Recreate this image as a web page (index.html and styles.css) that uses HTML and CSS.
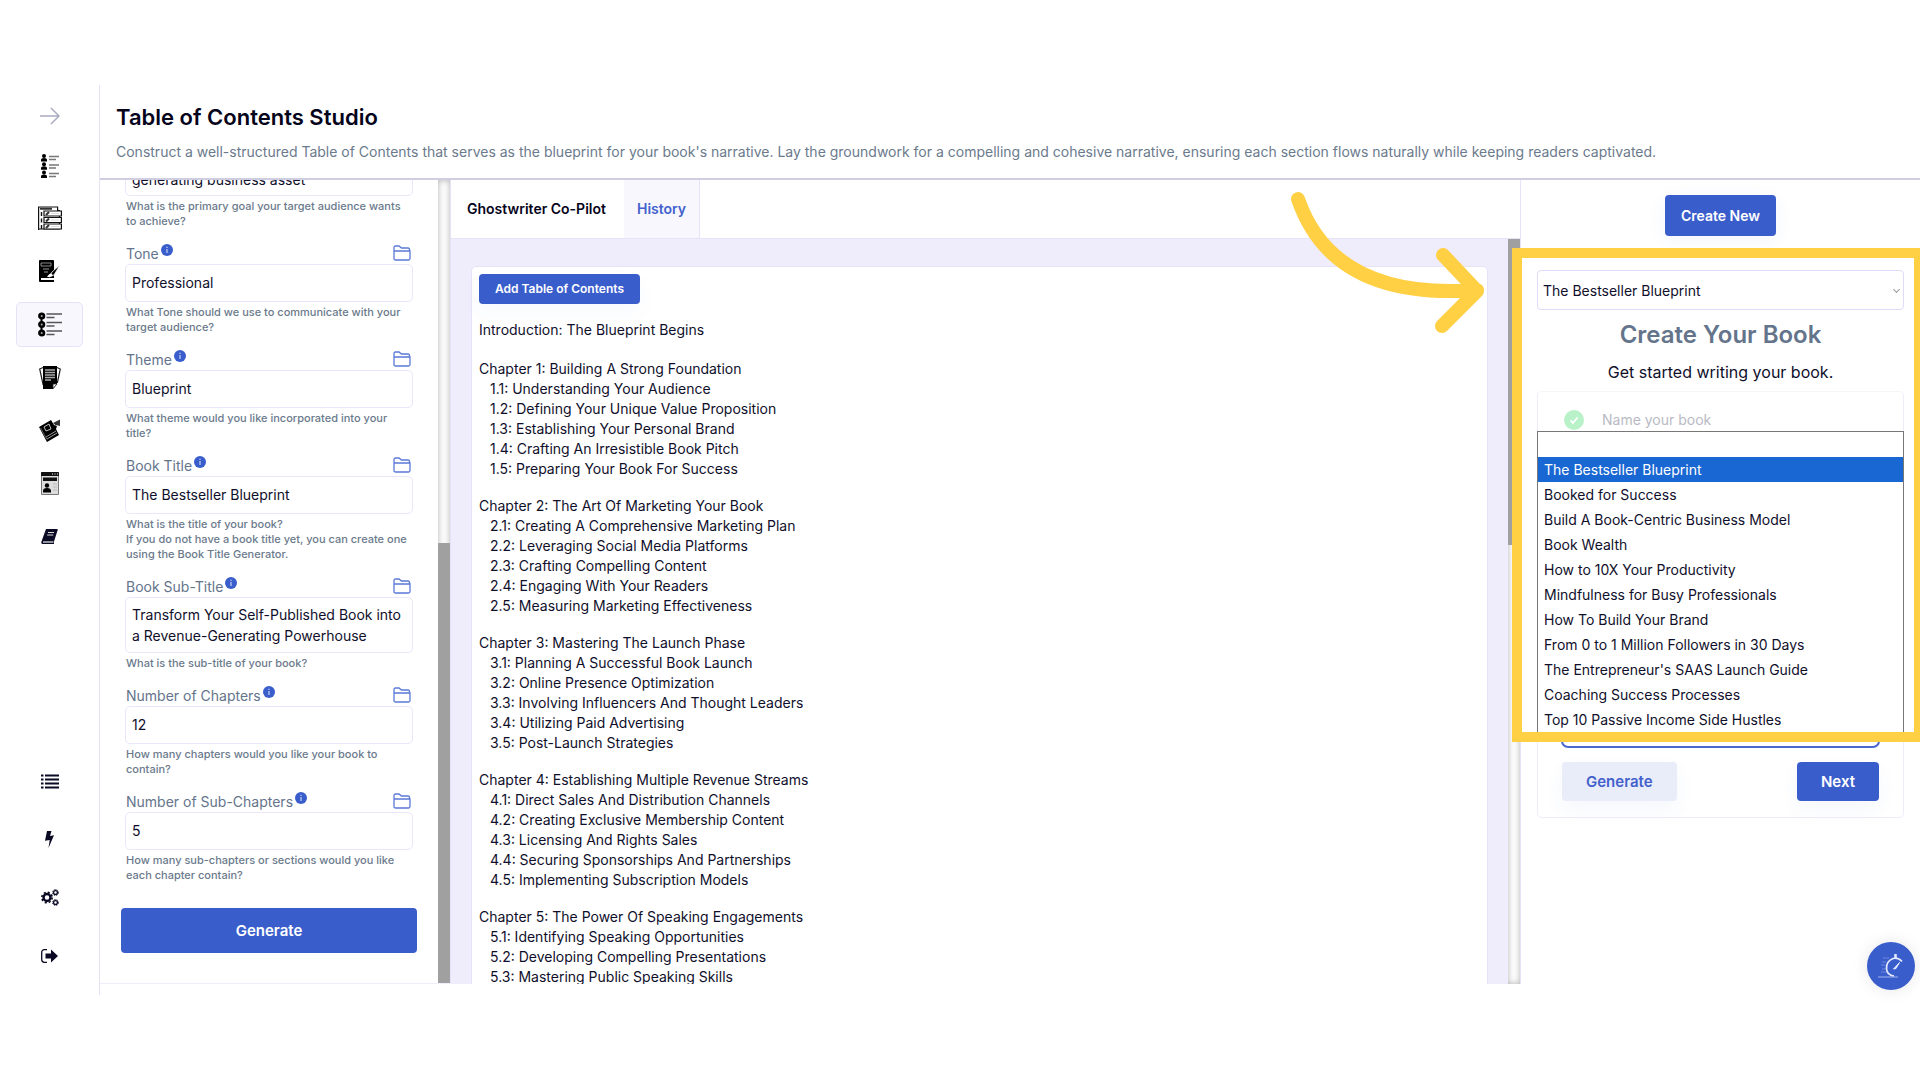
FILE: index.html
```html
<!DOCTYPE html>
<html lang="en">
<head>
  <meta charset="UTF-8">
  <meta name="viewport" content="width=device-width, initial-scale=1.0">
  <title>Table of Contents Studio</title>
  <link rel="stylesheet" href="styles.css">
</head>
<body>
  <!-- shared icons -->
  <svg class="defs" width="0" height="0" aria-hidden="true">
    <symbol id="folder" viewBox="0 0 18 16">
      <path d="M1 6V2.500Q1 1 2.500 1H6l2.500 2H15q1.500 0 1.500 1.500V6M1 6h16v7.500Q17 15 15.500 15h-13Q1 15 1 13.500z" fill="none" stroke="#5b78d8" stroke-width="1.300"/>
    </symbol>
    <symbol id="info" viewBox="0 0 12 12">
      <circle cx="6" cy="6" r="6" fill="#3a5dcc"/>
      <path d="M6 5v4M6 2.800v1.200" stroke="#c5d1f4" stroke-width="1.200"/>
    </symbol>
  </svg>

  <div class="app">
    <nav class="sidebar" aria-label="Studios">
      <div class="nav-group">
        <a href="#" class="nav-item nav-toggle" aria-label="Expand">
          <svg width="20" height="18" viewBox="0 0 20 18"><path d="M0 9h19M11 1l8 8-8 8" fill="none" stroke="#aaabc0" stroke-width="1.500"/></svg>
        </a>
        <a href="#" class="nav-item" aria-label="Audience">
          <svg width="18" height="24" viewBox="0 0 18 24">
            <g id="people"><circle cx="3" cy="2" r="2"/><path d="M0 7.500V6q0-2 3-2t3 2v1.500z"/></g>
            <use href="#people" y="8.300"/><use href="#people" y="16.500"/>
            <path d="M8 2.500h10M8 5.500h7M8 11h10M8 14h7M8 19.500h10M8 22.500h7" stroke="#777" stroke-width="1.300"/>
          </svg>
        </a>
        <a href="#" class="nav-item" aria-label="Outline">
          <svg width="24" height="25" viewBox="0 0 24 25">
            <g fill="#fff" stroke="#111" stroke-width="1.200">
              <path d="M.600 24V1h19v3.500h1.800v18.500H.600z"/><path d="M6 5h17.400v5H6zM6 11.500h17.400v5H6zM6 18h17.400v5H6z"/>
            </g>
            <path d="M3.500 6v4M3.500 12.500v4M3.500 19v4" stroke="#111" stroke-width="1.400"/>
            <path d="M2 2.800h12M8 9l3-3M8 15.500l3-3M8 22l3-3" stroke="#333" stroke-width="2"/>
            <path d="M13 7.500h8M13 14h8M13 20.500h8" stroke="#ddd"/>
          </svg>
        </a>
        <a href="#" class="nav-item" aria-label="Title">
          <svg width="23" height="23" viewBox="0 0 23 23">
            <path d="M1 1q0-1 1-1h13q1 0 1 1v17H3v2h13v2H2q-1 0-1-1z"/><path d="M3 3h10v3H3z" fill="none" stroke="#aaa" stroke-width=".8"/>
            <path d="M5 9h6M6 12h4" stroke="#999"/><path d="M22.500 4.500 14 12l-3 5 5-2 6-10z" stroke="#fff" stroke-width=".8"/>
            <path d="M9 17q3-5 5-3t-3 3z" fill="#fff"/>
          </svg>
        </a>
        <a href="#" class="nav-item active" aria-label="Table of contents" aria-current="page">
          <svg width="24" height="25" viewBox="0 0 24 25">
            <path d="M3.500 2v20" stroke="#000" stroke-width="2"/>
            <g fill="#aaa" stroke="#000" stroke-width="2.600"><circle cx="3.700" cy="4" r="2.300"/><circle cx="3.700" cy="12.500" r="2.300"/><circle cx="3.700" cy="21" r="2.300"/></g>
            <path d="M8.500 2H24M8.500 5.500h8M8.500 10.500H24M8.500 14h8M8.500 19H24M8.500 22.500h8" stroke="#555" stroke-width="1.500"/>
          </svg>
        </a>
        <a href="#" class="nav-item" aria-label="Pages">
          <svg width="22" height="25" viewBox="0 0 22 25">
            <path d="M4 2.500.700 4l3.500 16M18 2.500l3.300 1.500-3 14" fill="none" stroke="#222" stroke-width="1.200"/>
            <path d="M4 1h14v18l-4 5H4z"/><path d="M6 5h10M6 7.500h10M6 10h10M6 12.500h10M6 15h6" stroke="#aaa" stroke-width="1.300"/>
            <path d="M14 23.500V19h4z" fill="#fff" stroke="#222" stroke-width=".8"/>
          </svg>
        </a>
        <a href="#" class="nav-item" aria-label="Marketing">
          <svg width="22" height="23" viewBox="0 0 22 23">
            <path d="m0 8 12-7 3 5 3 1-1 3 3 6-12 7z"/>
            <path d="m5 8 5-3 2 5-5 2z" fill="none" stroke="#bbb"/><path d="m7 18 10-6M8 20l10-6" stroke="#999"/>
            <path d="m1.500 9 6.500 11.500" stroke="#777" stroke-width=".8"/>
            <path d="m14 4 3-1.500v4zM17 2.500 21 .5v6.500l-4-1" fill="#333"/>
          </svg>
        </a>
        <a href="#" class="nav-item" aria-label="Author page">
          <svg width="18" height="23" viewBox="0 0 18 23">
            <path d="M.5.5h17v22H.5z" fill="#ddd" stroke="#777"/><path d="M0 1q0-1 1-1h16q1 0 1 1v3H0zM2 5.500h14V9H2z" fill="#111"/>
            <path d="M11 2h1M13.500 2h1M16 2h1" stroke="#fff"/>
            <circle cx="6" cy="13.500" r="2.200"/><path d="M2 20.500V19q0-3 4-3t4 3v1.500z"/>
            <path d="M12 12h4M12 15h4M12 18h4" stroke="#bbb"/>
          </svg>
        </a>
        <a href="#" class="nav-item" aria-label="Book">
          <svg width="17" height="16" viewBox="0 0 17 16">
            <path d="M5 0h11q1 0 .7 1L13 12.500v2.500H1.500Q0 15 .3 13z" fill="#0b0a25"/>
            <path d="M2 13h10.500" stroke="#ddd" stroke-width="1.300"/><path d="M7 3.500h6M6.200 6h6" stroke="#ddd" stroke-width="1.200"/>
          </svg>
        </a>
      </div>
      <div class="nav-group nav-bottom">
        <a href="#" class="nav-item" aria-label="List">
          <svg width="18" height="15" viewBox="0 0 18 15"><path d="M0 1.500h2.500M4 1.500h14M0 5.500h2.500M4 5.500h14M0 9.500h2.500M4 9.500h14M0 13.500h2.500M4 13.500h14" stroke="#0b0a25" stroke-width="2.200"/></svg>
        </a>
        <a href="#" class="nav-item" aria-label="Quick actions">
          <svg width="9" height="17" viewBox="0 0 9 17"><path d="M2 0h4.500L5 5l4-.8L3.500 17l1.200-8L0 9.800z" fill="#0b0a25"/></svg>
        </a>
        <a href="#" class="nav-item" aria-label="Settings">
          <svg width="18" height="17" viewBox="0 0 18 17" fill="none" stroke="#0b0a25">
            <circle cx="6" cy="8.500" r="3.500" stroke-width="2.500"/><circle cx="6" cy="8.500" r="5.200" stroke-width="1.600" stroke-dasharray="2.100 2"/>
            <circle cx="14.500" cy="3.500" r="1.900" stroke-width="1.300"/><circle cx="14.500" cy="3.500" r="2.900" stroke-dasharray="1.400 1"/>
            <circle cx="14.500" cy="13.500" r="1.900" stroke-width="1.300"/><circle cx="14.500" cy="13.500" r="2.900" stroke-dasharray="1.400 1"/>
          </svg>
        </a>
        <a href="#" class="nav-item" aria-label="Log out">
          <svg width="17" height="14" viewBox="0 0 17 14"><path d="M6 .700H3.500Q.700.700.700 3.500v7q0 2.800 2.800 2.800H6" fill="none" stroke="#0b0a25" stroke-width="1.300"/><path d="M4.500 4.500H10V.500L17 7l-7 6.500v-4H4.500z" fill="#0b0a25"/></svg>
        </a>
      </div>
    </nav>

    <div class="page">
      <header class="page-header">
        <h1>Table of Contents Studio</h1>
        <p>Construct a well-structured Table of Contents that serves as the blueprint for your book's narrative. Lay the groundwork for a compelling and cohesive narrative, ensuring each section flows naturally while keeping readers captivated.</p>
      </header>

      <div class="workspace">
        <section class="form-panel">
          <form class="form">
            <div class="field">
              <textarea class="scrolled" rows="2" aria-label="Goal">generating business asset</textarea>
              <p class="help">What is the primary goal your target audience wants to achieve?</p>
            </div>
            <div class="field">
              <div class="field-head"><label for="tone">Tone</label><svg class="info"><use href="#info"/></svg><svg class="folder"><use href="#folder"/></svg></div>
              <input type="text" id="tone" value="Professional">
              <p class="help">What Tone should we use to communicate with your target audience?</p>
            </div>
            <div class="field">
              <div class="field-head"><label for="theme">Theme</label><svg class="info"><use href="#info"/></svg><svg class="folder"><use href="#folder"/></svg></div>
              <input type="text" id="theme" value="Blueprint">
              <p class="help">What theme would you like incorporated into your title?</p>
            </div>
            <div class="field">
              <div class="field-head"><label for="title">Book Title</label><svg class="info"><use href="#info"/></svg><svg class="folder"><use href="#folder"/></svg></div>
              <input type="text" id="title" value="The Bestseller Blueprint">
              <p class="help">What is the title of your book?<br>If you do not have a book title yet, you can create one using the Book Title Generator.</p>
            </div>
            <div class="field">
              <div class="field-head"><label for="subtitle">Book Sub-Title</label><svg class="info"><use href="#info"/></svg><svg class="folder"><use href="#folder"/></svg></div>
              <textarea id="subtitle" rows="2">Transform Your Self-Published Book into a Revenue-Generating Powerhouse</textarea>
              <p class="help">What is the sub-title of your book?</p>
            </div>
            <div class="field">
              <div class="field-head"><label for="chapters">Number of Chapters</label><svg class="info"><use href="#info"/></svg><svg class="folder"><use href="#folder"/></svg></div>
              <input type="text" id="chapters" value="12">
              <p class="help">How many chapters would you like your book to contain?</p>
            </div>
            <div class="field">
              <div class="field-head"><label for="subchapters">Number of Sub-Chapters</label><svg class="info"><use href="#info"/></svg><svg class="folder"><use href="#folder"/></svg></div>
              <input type="text" id="subchapters" value="5">
              <p class="help">How many sub-chapters or sections would you like each chapter contain?</p>
            </div>
            <button type="button" class="btn btn-wide">Generate</button>
          </form>
          <div class="scrollbar at-end"><div class="thumb"></div></div>
        </section>

        <main class="editor">
          <div class="tabs">
            <button type="button" class="tab">Ghostwriter Co-Pilot</button>
            <button type="button" class="tab tab-alt">History</button>
          </div>
          <div class="editor-body">
            <div class="toc-wrap">
              <article class="toc">
                <button type="button" class="btn btn-small">Add Table of Contents</button>
                <p class="intro">Introduction: The Blueprint Begins</p>
                <h2>Chapter 1: Building A Strong Foundation</h2>
                <ul>
                  <li>1.1: Understanding Your Audience</li>
                  <li>1.2: Defining Your Unique Value Proposition</li>
                  <li>1.3: Establishing Your Personal Brand</li>
                  <li>1.4: Crafting An Irresistible Book Pitch</li>
                  <li>1.5: Preparing Your Book For Success</li>
                </ul>
                <h2>Chapter 2: The Art Of Marketing Your Book</h2>
                <ul>
                  <li>2.1: Creating A Comprehensive Marketing Plan</li>
                  <li>2.2: Leveraging Social Media Platforms</li>
                  <li>2.3: Crafting Compelling Content</li>
                  <li>2.4: Engaging With Your Readers</li>
                  <li>2.5: Measuring Marketing Effectiveness</li>
                </ul>
                <h2>Chapter 3: Mastering The Launch Phase</h2>
                <ul>
                  <li>3.1: Planning A Successful Book Launch</li>
                  <li>3.2: Online Presence Optimization</li>
                  <li>3.3: Involving Influencers And Thought Leaders</li>
                  <li>3.4: Utilizing Paid Advertising</li>
                  <li>3.5: Post-Launch Strategies</li>
                </ul>
                <h2>Chapter 4: Establishing Multiple Revenue Streams</h2>
                <ul>
                  <li>4.1: Direct Sales And Distribution Channels</li>
                  <li>4.2: Creating Exclusive Membership Content</li>
                  <li>4.3: Licensing And Rights Sales</li>
                  <li>4.4: Securing Sponsorships And Partnerships</li>
                  <li>4.5: Implementing Subscription Models</li>
                </ul>
                <h2>Chapter 5: The Power Of Speaking Engagements</h2>
                <ul>
                  <li>5.1: Identifying Speaking Opportunities</li>
                  <li>5.2: Developing Compelling Presentations</li>
                  <li>5.3: Mastering Public Speaking Skills</li>
                </ul>
              </article>
            </div>
            <div class="scrollbar"><div class="thumb"></div></div>
          </div>
        </main>

        <aside class="book-panel">
          <button type="button" class="btn btn-new">Create New</button>
          <div class="picker">
            <select aria-label="Book">
              <option>The Bestseller Blueprint</option>
            </select>
            <ul class="options" role="listbox" aria-label="Books">
              <li role="option" aria-label="None"></li>
              <li role="option" class="selected" aria-selected="true">The Bestseller Blueprint</li>
              <li role="option">Booked for Success</li>
              <li role="option">Build A Book-Centric Business Model</li>
              <li role="option">Book Wealth</li>
              <li role="option">How to 10X Your Productivity</li>
              <li role="option">Mindfulness for Busy Professionals</li>
              <li role="option">How To Build Your Brand</li>
              <li role="option">From 0 to 1 Million Followers in 30 Days</li>
              <li role="option">The Entrepreneur's SAAS Launch Guide</li>
              <li role="option">Coaching Success Processes</li>
              <li role="option">Top 10 Passive Income Side Hustles</li>
            </ul>
          </div>
          <h2>Create Your Book</h2>
          <p class="lead">Get started writing your book.</p>
          <div class="steps">
            <div class="step-name">
              <svg width="20" height="20" viewBox="0 0 20 20"><circle cx="10" cy="10" r="10" fill="#b9f2c9"/><path d="m6.500 10.500 2.500 2.500 4.500-5.500" fill="none" stroke="#fff" stroke-width="1.800"/></svg>
              <span>Name your book</span>
            </div>
            <textarea class="answer" aria-label="Answer"></textarea>
            <div class="actions">
              <button type="button" class="btn btn-light">Generate</button>
              <button type="button" class="btn btn-next">Next</button>
            </div>
          </div>

          <!-- tutorial highlight -->
          <div class="highlight"></div>
          <svg class="pointer" width="210" height="160" viewBox="0 0 210 160">
            <path d="M18 19C39 80 92 118 197 110M163 75l34 36-35 35" fill="none" stroke="#ffd044" stroke-width="14" stroke-linecap="round" stroke-linejoin="round"/>
          </svg>
        </aside>
      </div>
    </div>

    <button type="button" class="fab" aria-label="Quick start">
      <svg width="28" height="28" viewBox="0 0 28 28" fill="none" stroke="#e4eaff">
        <path d="M25 9.500Q21 5 16 6.500q-7 3-6.500 10T17 24" stroke-width="1.700"/>
        <path d="M18.500 2v4" stroke-width="2.500"/><path d="m16.500 17 6-6.500-3.500 6z" fill="#e4eaff" stroke-width="1"/>
        <path d="M1 25h20" stroke-width="1" opacity=".6"/>
        <path d="M6 6h6M5 10h4M4 13h4M5 17h4M4 20h5" stroke-width="1" opacity=".3"/>
      </svg>
    </button>
  </div>
</body>
</html>
```
FILE: styles.css
```css
* {
  margin: 0;
  padding: 0;
  box-sizing: border-box;
}

body {
  background: #fff;
  color: #100f2b;
  font-family: Inter, "Liberation Sans", sans-serif;
  font-size: 14px;
  line-height: 20px;
}

button, input, textarea, select {
  font: inherit;
  color: inherit;
}

.defs {
  position: absolute;
}

.app {
  position: relative;
  display: flex;
  height: 100vh;
  padding: 85px 0;
  overflow: hidden;
}

/* sidebar */
.sidebar {
  width: 100px;
  flex: none;
  display: flex;
  flex-direction: column;
  justify-content: space-between;
  align-items: center;
  padding: 8px 0 17px;
  border-right: 1px solid #e6e3f8;
}

.nav-group {
  display: flex;
  flex-direction: column;
  gap: 8px;
}

.nav-bottom {
  gap: 13px;
}

.nav-item {
  width: 67px;
  height: 45px;
  display: flex;
  align-items: center;
  justify-content: center;
  border: 1px solid transparent;
  border-radius: 5px;
}

.nav-toggle {
  margin-bottom: -3px;
}

.nav-item.active {
  background: #f8f7fe;
  border-color: #e6e3f8;
}

/* header */
.page {
  flex: 1;
  min-width: 0;
  display: flex;
  flex-direction: column;
  margin-bottom: 11px;
}

.page-header {
  height: 95px;
  padding: 18px 16px 0;
  border-bottom: 2px solid #cfcde2;
}

.page-header h1 {
  font-size: 22px;
  line-height: 28px;
  font-weight: 600;
  color: #05041a;
  margin-bottom: 11px;
}

.page-header p {
  color: #6b7a8c;
  white-space: nowrap;
}

.workspace {
  flex: 1;
  min-height: 0;
  display: flex;
}

/* left form */
.form-panel {
  width: 350px;
  flex: none;
  display: flex;
  border-bottom: 1px solid #efedfc;
}

.form {
  flex: 1;
  display: flex;
  flex-direction: column;
  justify-content: flex-end;
  gap: 15px;
  padding: 0 21px 30px 21px;
  overflow: hidden;
}

.field {
  flex: none;
  padding: 0 4px;
}

.field-head {
  display: flex;
  align-items: flex-start;
  height: 20px;
  padding: 0 2px 0 1px;
  color: #64748b;
}

.info {
  width: 12px;
  height: 12px;
  margin-left: 2px;
}

.folder {
  width: 18px;
  height: 16px;
  margin: 1px 0 0 auto;
}

.field input,
.field textarea {
  display: block;
  width: 100%;
  border: 1px solid #eae7fb;
  border-radius: 5px;
  padding: 6px;
  background: #fff;
  outline: none;
  resize: none;
  overflow: hidden;
}

.field input {
  height: 38px;
  padding-bottom: 8px;
}

.field textarea {
  height: 56px;
  line-height: 21px;
}

.field .scrolled {
  padding-top: 28px;
}

.help {
  margin-top: 3px;
  padding-left: 1px;
  font-size: 11px;
  line-height: 15px;
  font-weight: 500;
  color: #6b7a8c;
}

.btn {
  border: none;
  border-radius: 4px;
  background: #3a5dcc;
  color: #fff;
  font-weight: 600;
  cursor: pointer;
}

.btn-wide {
  flex: none;
  height: 45px;
  margin-top: 10px;
  font-size: 15px;
}

/* fake scrollbars */
.scrollbar {
  width: 12px;
  flex: none;
  display: flex;
  flex-direction: column;
  background: #fdfdfd;
  box-shadow: inset 0 0 6px rgba(0, 0, 0, 0.3);
}

.scrollbar .thumb {
  height: 306px;
  background: #a0a0a0;
}

.scrollbar.at-end {
  justify-content: flex-end;
}

.scrollbar.at-end .thumb {
  height: 440px;
}

/* table of contents */
.editor {
  flex: 1;
  min-width: 0;
  display: flex;
  flex-direction: column;
  border-left: 1px solid #e6e3f8;
}

.tabs {
  display: flex;
  height: 59px;
  border-bottom: 1px solid #e6e3f8;
}

.tab {
  border: none;
  padding: 0 18px 0 16px;
  background: #fff;
  color: #05041a;
  font-weight: 600;
}

.tab-alt {
  padding: 0 13px;
  background: #f8f7fe;
  border-right: 1px solid #e6e3f8;
  color: #4361cc;
}

.editor-body {
  flex: 1;
  min-height: 0;
  display: flex;
  background: #efedfc;
}

.toc-wrap {
  flex: 1;
  padding: 27px 20px 0;
  overflow: hidden;
}

.toc {
  min-height: 100%;
  padding: 7px;
  background: #fff;
  border: 1px solid #e6e3f8;
  border-radius: 5px 5px 0 0;
}

.btn-small {
  display: block;
  height: 30px;
  padding: 0 16px;
  font-size: 12px;
  margin-bottom: 16px;
  box-shadow: 0 8px 20px rgba(58, 93, 204, 0.04);
}

.toc .intro {
  margin-bottom: 19px;
}

.toc h2 {
  font-size: 14px;
  line-height: 20px;
  font-weight: 400;
}

.toc ul {
  list-style: none;
  padding-left: 11px;
  margin-bottom: 17px;
}

/* right panel */
.book-panel {
  position: relative;
  width: 400px;
  flex: none;
  padding: 15px 16px 0;
  border-left: 1px solid #e6e3f8;
  text-align: center;
}

.btn-new {
  height: 41px;
  padding: 0 16px;
  margin-bottom: 34px;
  box-shadow: 0 4px 20px rgba(58, 93, 204, 0.06);
}

.picker {
  position: relative;
  text-align: left;
}

.picker select {
  display: block;
  width: 100%;
  height: 40px;
  padding: 2px 5px 0;
  appearance: none;
  border: 1px solid #dedcf8;
  border-radius: 4px;
  background: #fff;
}

.picker::after {
  content: "";
  position: absolute;
  right: 5px;
  top: 17px;
  width: 4px;
  height: 4px;
  border: solid #999;
  border-width: 0 1px 1px 0;
  transform: rotate(45deg);
}

.options {
  position: absolute;
  top: 161px;
  left: 0;
  right: 0;
  z-index: 2;
  list-style: none;
  background: #fff;
  border: 1px solid #777;
}

.options li {
  height: 25px;
  padding: 0 6px;
  line-height: 25px;
}

.options .selected {
  background: #1967d2;
  color: #fff;
}

.book-panel h2 {
  margin-top: 10px;
  font-size: 24px;
  line-height: 30px;
  font-weight: 600;
  color: #64748b;
}

.lead {
  margin: 10px 0 7px;
  font-size: 16px;
  line-height: 24px;
}

.steps {
  height: 427px;
  display: flex;
  flex-direction: column;
  padding: 18px 24px 16px;
  border: 1px solid #eeecfb;
  border-top-color: #f6f6fa;
  border-radius: 5px;
}

.step-name {
  display: flex;
  align-items: center;
  gap: 18px;
  padding-left: 2px;
  color: #b9bac4;
}

.answer {
  flex: 1;
  margin: 20px -1px 14px;
  border: 2px solid #4a68cf;
  border-radius: 7px;
  resize: none;
}

.actions {
  display: flex;
  justify-content: space-between;
}

.btn-light,
.btn-next {
  height: 39px;
  padding: 0 24px;
  font-size: 15px;
  box-shadow: 0 8px 20px rgba(58, 93, 204, 0.05);
}

.btn-light {
  background: #e9edf9;
  color: #4361cc;
}

.highlight {
  position: absolute;
  top: 68px;
  left: -9px;
  right: -4px;
  height: 494px;
  border: 10px solid #ffd044;
  z-index: 3;
}

.pointer {
  position: absolute;
  top: 0;
  left: -241px;
  z-index: 3;
}

.fab {
  position: absolute;
  right: 5px;
  bottom: 90px;
  width: 48px;
  height: 48px;
  display: flex;
  align-items: center;
  justify-content: center;
  border: none;
  border-radius: 50%;
  background: #3a5dcc;
  box-shadow: 0 0 16px rgba(0, 0, 0, 0.1);
}
```
